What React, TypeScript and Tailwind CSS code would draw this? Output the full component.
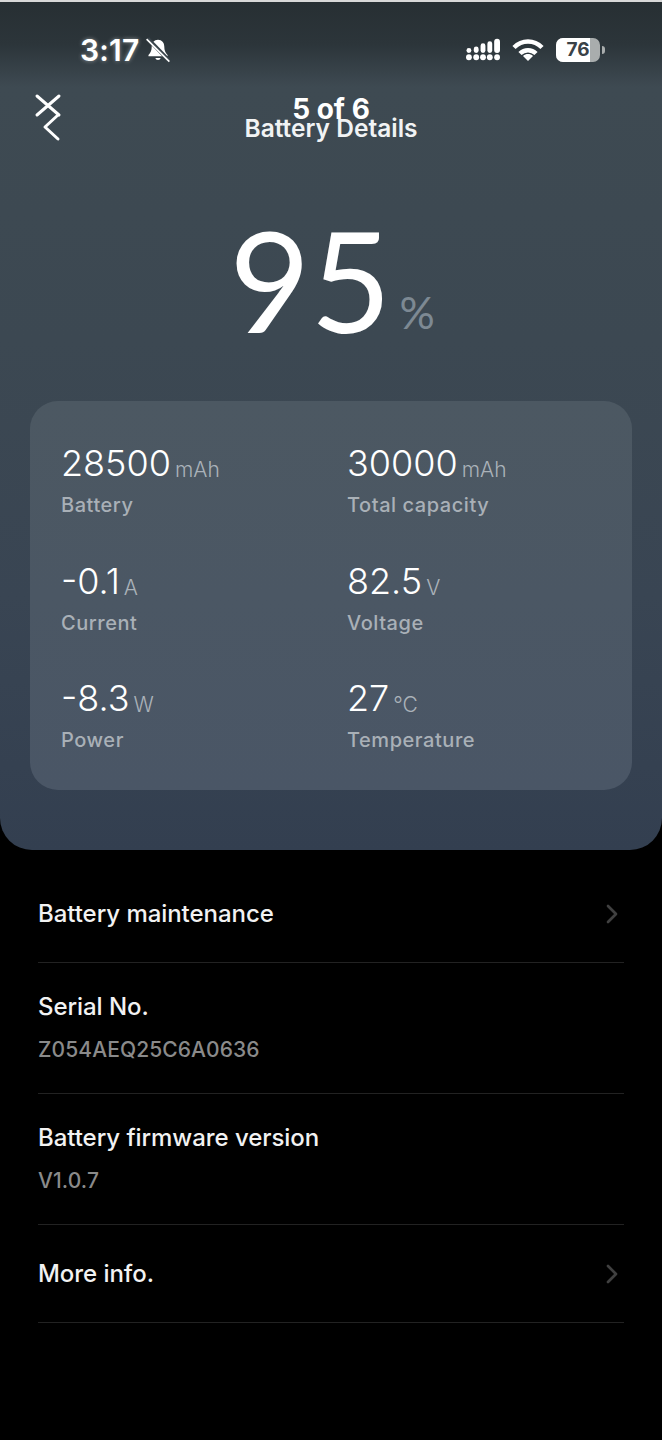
import { ChevronRight } from "lucide-react";

const stats = [
  { value: "28500", unit: "mAh", label: "Battery" },
  { value: "30000", unit: "mAh", label: "Total capacity" },
  { value: "-0.1", unit: "A", label: "Current" },
  { value: "82.5", unit: "V", label: "Voltage" },
  { value: "-8.3", unit: "W", label: "Power" },
  { value: "27", unit: "°C", label: "Temperature" },
];

function StatusBar() {
  return (
    <div className="flex h-[32px] items-center justify-between pl-[80px] pr-[57px] text-white">
      <div className="flex items-center gap-[6px]">
        <span className="font-['Inter'] text-[30px] font-semibold leading-none tracking-[0.2px] [text-shadow:0_0_4px_rgba(255,255,255,0.45)]">3:17</span>
        <svg width="26" height="28" viewBox="0 0 24 24" fill="white">
          <path d="M12 2.5c-3.6 0-5.8 2.7-5.8 6.3 0 3.6-.9 5.6-3 7.7v1.2h17.6v-1.2c-2.100-2.100-3-4.100-3-7.700 0-3.600-2.200-6.300-5.800-6.300z" />
          <path d="M9.500 19.300a2.600 2.600 0 0 0 5 0z" />
          <path d="M2.500 1.500 22 21.500" stroke="#3a454c" strokeWidth="3.600" />
          <path d="M1.500 2 22.500 22.800" stroke="white" strokeWidth="1.500" />
        </svg>
      </div>
      <div className="flex items-center gap-[12px]">
        <svg width="34" height="24" viewBox="0 0 35 24" fill="white">
          <circle cx="3" cy="19.500" r="3" />
          <circle cx="10.500" cy="19.500" r="3" />
          <circle cx="17.500" cy="19.500" r="3" />
          <circle cx="24.500" cy="19.500" r="3" />
          <circle cx="32" cy="19.500" r="3" />
          <rect x="0.500" y="10" width="5" height="5" rx="2.500" />
          <rect x="8" y="8.500" width="5" height="6.500" rx="2.500" />
          <rect x="15" y="5" width="5" height="10" rx="2.500" />
          <rect x="22" y="3" width="5" height="12" rx="2.500" />
          <rect x="29" y="0.500" width="6" height="14.500" rx="3" />
        </svg>
        <svg width="32" height="24" viewBox="0 0 32 24" fill="none" stroke="white" strokeWidth="4.500">
          <path d="M2 9.500C10 1.500 22 1.500 30 9.500" />
          <path d="M8 15.500c4.500-4.500 11.500-4.500 16 0" />
          <path d="M16 23l-5-5c2.800-2.600 7.200-2.600 10 0z" fill="white" stroke="none" />
        </svg>
        <div className="flex items-center gap-[2px]">
          <div className="relative h-[24px] w-[44px] overflow-hidden rounded-[7px] bg-[#a9adad]">
            <div className="h-full w-[34px] bg-white" />
            <span className="absolute inset-0 flex items-center justify-center font-['Inter'] text-[19px] font-bold text-[#3a4248]">76</span>
          </div>
          <div className="h-[8px] w-[3px] rounded-r-full bg-[#a9adad]" />
        </div>
      </div>
    </div>
  );
}

function Stat({ value, unit, label }: { value: string; unit: string; label: string }) {
  return (
    <div>
      <div className="flex h-[42px] items-baseline gap-[4px]">
        <span className="font-['Inter'] text-[36px] font-[350] leading-[42px] text-white">{value}</span>
        <span className="translate-y-px font-['Inter'] text-[21px] font-[350] text-[#aab2b9]">{unit}</span>
      </div>
      <div className="mt-[9px] font-['Inter'] text-[20px] font-medium leading-[24px] tracking-[0.55px] text-[#a9b0b7]">{label}</div>
    </div>
  );
}

function Row({ title, sub, arrow, height }: { title: string; sub?: string; arrow?: boolean; height: string }) {
  return (
    <div className={`flex items-center justify-between border-b border-[#222222] pt-[1px] ${height}`}>
      <div>
        <div className="font-['Inter'] text-[24px] font-medium leading-[28px] tracking-[-0.05px] text-[#f2f2f2]">{title}</div>
        {sub && <div className="mt-[15px] font-['Inter'] text-[21px] font-medium leading-[28px] tracking-[0.1px] text-[#8a8a8a]">{sub}</div>}
      </div>
      {arrow && <ChevronRight size={32} strokeWidth={2} className="mr-[-4px] text-[#404040]" />}
    </div>
  );
}

export default function App() {
  return (
    <div className="h-[1440px] w-[662px] overflow-hidden bg-black">
      <div className="h-[850px] rounded-b-[32px] border-t-2 border-[#d8d8d8] bg-[linear-gradient(180deg,#272f33_0%,#2c353a_5%,#3e4a52_10%,#3c4852_40%,#394553_70%,#333f50_100%)] pt-[32px]">
        <StatusBar />
        <div className="relative mt-[12px] h-[60px]">
          <svg className="absolute left-[34px] top-[15px]" width="30" height="50" viewBox="0 0 30 50" fill="none" stroke="white" strokeWidth="3" strokeLinecap="round" strokeLinejoin="round">
            <path d="M3 3 25 22 M25 3 3 22" />
            <path d="M24 22 11 34 24 46" />
          </svg>
          <div className="absolute left-0 right-0 top-[16px] text-center font-['Inter'] text-[28px] font-bold leading-[30px] text-white">5 of 6</div>
          <div className="absolute left-0 right-0 top-[36px] text-center font-['Inter'] text-[24.500px] font-semibold leading-[28px] text-[#f1f3f4]">Battery Details</div>
        </div>
        <div className="mt-[76px] flex h-[130px] items-end justify-center">
          <span className="ml-[2px] font-['Lato'] text-[140px] font-normal leading-[130px] text-white">95</span>
          <span className="mb-[2px] ml-[8px] font-['Lato'] text-[44px] font-normal leading-[60px] text-[#7d8993]">%</span>
        </div>
        <div className="mx-[30px] mt-[57px] grid h-[389px] grid-cols-[286px_1fr] content-start gap-y-[42.500px] rounded-[28px] bg-[linear-gradient(180deg,#4c5862_0%,#4a5666_100%)] px-[31px] pt-[41px]">
          {stats.map((s) => (
            <Stat key={s.label} {...s} />
          ))}
        </div>
      </div>
      <div className="mx-[38px] pt-[14px]">
        <Row title="Battery maintenance" arrow height="h-[99px]" />
        <Row title="Serial No." sub="Z054AEQ25C6A0636" height="h-[131px]" />
        <Row title="Battery firmware version" sub="V1.0.7" height="h-[131px]" />
        <Row title="More info." arrow height="h-[98px]" />
      </div>
    </div>
  );
}
